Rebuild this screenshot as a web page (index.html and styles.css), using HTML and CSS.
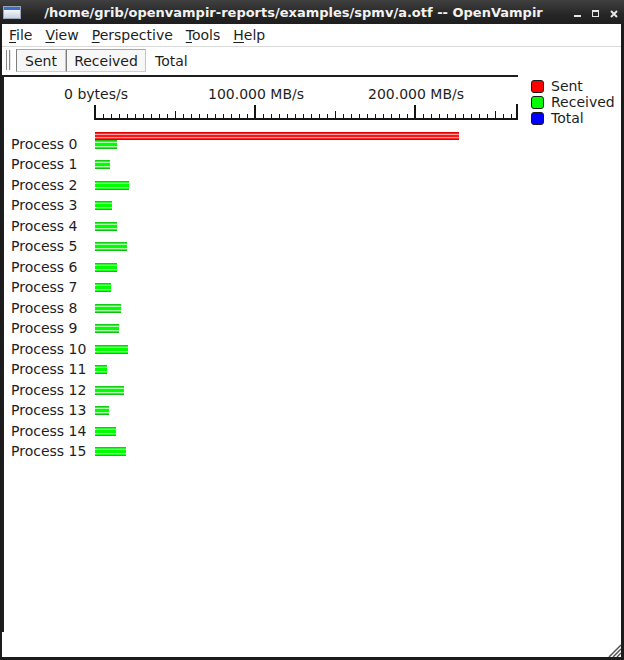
FILE: index.html
```html
<!DOCTYPE html>
<html>
<head>
<meta charset="utf-8">
<link rel="stylesheet" href="styles.css">
</head>
<body>
<div class="window">
  <div class="titlebar">
    <svg class="appicon" width="18" height="13" viewBox="0 0 18 13">
      <defs><linearGradient id="g" x1="0" y1="0" x2="0" y2="1"><stop offset="0" stop-color="#f4f6fa"/><stop offset="1" stop-color="#c9d2df"/></linearGradient></defs>
      <rect x="0.5" y="0.5" width="17" height="12" fill="#dfe5ee" stroke="#9aa6b8"/>
      <rect x="1" y="1" width="16" height="3" fill="#3b6fc9"/>
      <rect x="1" y="4" width="16" height="8" fill="url(#g)"/>
    </svg>
    <div class="title">/home/grib/openvampir-reports/examples/spmv/a.otf -- OpenVampir</div>
    <div class="wbtns">
      <svg width="8" height="8" viewBox="0 0 8 8"><rect x="0" y="5" width="7" height="2" fill="#e6e6e6"/></svg>
      <svg width="8" height="8" viewBox="0 0 8 8"><rect x="0.5" y="0.5" width="6" height="6" fill="none" stroke="#e6e6e6"/><rect x="0" y="0" width="7" height="2" fill="#e6e6e6"/></svg>
      <svg width="8" height="8" viewBox="0 0 8 8"><path d="M1 1L7 7M7 1L1 7" stroke="#e6e6e6" stroke-width="2"/></svg>
    </div>
  </div>
  <div class="client">
    <div class="menubar">
      <span class="menu"><u>F</u>ile</span>
      <span class="menu"><u>V</u>iew</span>
      <span class="menu"><u>P</u>erspective</span>
      <span class="menu"><u>T</u>ools</span>
      <span class="menu"><u>H</u>elp</span>
    </div>
    <div class="toolbar">
      <div class="handle"></div>
      <div class="tb checked sent">Sent</div>
      <div class="tb checked recv">Received</div>
      <div class="tb flat">Total</div>
    </div>
    <div class="content">
      <div class="chart">
        <svg class="axis" width="514" height="53" viewBox="0 0 514 53">
          <g class="axislabels" text-anchor="middle">
            <text x="92" y="22">0 bytes/s</text>
            <text x="252" y="22">100.000 MB/s</text>
            <text x="412" y="22">200.000 MB/s</text>
          </g>
          <g fill="#141414" shape-rendering="crispEdges">
            <rect x="90" y="41" width="424" height="2"/>
            <rect x="90" y="28" width="2" height="15"/>
            <rect x="250" y="28" width="2" height="15"/>
            <rect x="410" y="28" width="2" height="15"/>
            <rect x="512" y="27" width="2" height="16"/>
          </g>
          <path stroke="#141414" stroke-width="1" shape-rendering="crispEdges" d="M171.5 34V43M331.5 34V43M491.5 34V43M99.5 37V43M107.5 37V43M115.5 37V43M123.5 37V43M131.5 37V43M139.5 37V43M147.5 37V43M155.5 37V43M163.5 37V43M179.5 37V43M187.5 37V43M195.5 37V43M203.5 37V43M211.5 37V43M219.5 37V43M227.5 37V43M235.5 37V43M243.5 37V43M259.5 37V43M267.5 37V43M275.5 37V43M283.5 37V43M291.5 37V43M299.5 37V43M307.5 37V43M315.5 37V43M323.5 37V43M339.5 37V43M347.5 37V43M355.5 37V43M363.5 37V43M371.5 37V43M379.5 37V43M387.5 37V43M395.5 37V43M403.5 37V43M419.5 37V43M427.5 37V43M435.5 37V43M443.5 37V43M451.5 37V43M459.5 37V43M467.5 37V43M475.5 37V43M483.5 37V43M499.5 37V43M507.5 37V43"/>
        </svg>
        <div class="rows">
          <div class="row"><span class="label">Process 0</span><div class="bars"><div class="bar sentbar" style="width:364px"></div><div class="bar recvbar" style="width:22px"></div></div></div>
          <div class="row"><span class="label">Process 1</span><div class="bars"><div class="bar recvbar" style="width:15px"></div></div></div>
          <div class="row"><span class="label">Process 2</span><div class="bars"><div class="bar recvbar" style="width:34px"></div></div></div>
          <div class="row"><span class="label">Process 3</span><div class="bars"><div class="bar recvbar" style="width:17px"></div></div></div>
          <div class="row"><span class="label">Process 4</span><div class="bars"><div class="bar recvbar" style="width:22px"></div></div></div>
          <div class="row"><span class="label">Process 5</span><div class="bars"><div class="bar recvbar" style="width:32px"></div></div></div>
          <div class="row"><span class="label">Process 6</span><div class="bars"><div class="bar recvbar" style="width:22px"></div></div></div>
          <div class="row"><span class="label">Process 7</span><div class="bars"><div class="bar recvbar" style="width:16px"></div></div></div>
          <div class="row"><span class="label">Process 8</span><div class="bars"><div class="bar recvbar" style="width:26px"></div></div></div>
          <div class="row"><span class="label">Process 9</span><div class="bars"><div class="bar recvbar" style="width:24px"></div></div></div>
          <div class="row"><span class="label">Process 10</span><div class="bars"><div class="bar recvbar" style="width:33px"></div></div></div>
          <div class="row"><span class="label">Process 11</span><div class="bars"><div class="bar recvbar" style="width:12px"></div></div></div>
          <div class="row"><span class="label">Process 12</span><div class="bars"><div class="bar recvbar" style="width:29px"></div></div></div>
          <div class="row"><span class="label">Process 13</span><div class="bars"><div class="bar recvbar" style="width:14px"></div></div></div>
          <div class="row"><span class="label">Process 14</span><div class="bars"><div class="bar recvbar" style="width:21px"></div></div></div>
          <div class="row"><span class="label">Process 15</span><div class="bars"><div class="bar recvbar" style="width:31px"></div></div></div>
        </div>
      </div>
      <div class="legend">
        <div class="litem"><span class="swatch red"></span>Sent</div>
        <div class="litem"><span class="swatch green"></span>Received</div>
        <div class="litem"><span class="swatch blue"></span>Total</div>
      </div>
    </div>
    <div class="statusbar">
      <svg class="grip" width="14" height="14" viewBox="0 0 14 14">
        <path d="M14 2L2 14M14 6L6 14M14 10L10 14" stroke="#555" stroke-width="1.5"/>
      </svg>
    </div>
  </div>
</div>
</body>
</html>
```

FILE: styles.css
```css
html, body {
  margin: 0;
  padding: 0;
}
body {
  width: 624px;
  height: 660px;
  overflow: hidden;
  background: #1b1b1b;
  font-family: "DejaVu Sans", sans-serif;
  font-size: 14px;
  color: #1e1e1e;
}
.window {
  display: flex;
  flex-direction: column;
  height: 660px;
}
.titlebar {
  height: 24px;
  flex: none;
  display: flex;
  align-items: center;
  background: linear-gradient(#404040, #262626 60%, #1e1e1e);
  padding: 0 6px 0 3px;
}
.appicon {
  flex: none;
  display: block;
}
.title {
  flex: 1;
  text-align: center;
  color: #f2f2f2;
  font-weight: bold;
  font-size: 13px;
  white-space: nowrap;
  padding-right: 8px;
}
.wbtns {
  display: flex;
  gap: 10px;
  align-items: center;
  padding-top: 3px;
}
.wbtns svg {
  display: block;
}
.client {
  flex: 1;
  background: #ffffff;
  margin: 0 3px 3px 2px;
  display: flex;
  flex-direction: column;
  min-height: 0;
}
.menubar {
  height: 22px;
  flex: none;
  display: flex;
  align-items: center;
  border-bottom: 1px solid #dadada;
}
.menu {
  padding: 0 6.5px;
  white-space: nowrap;
}
.menu:first-child {
  padding-left: 7px;
}
.menu u {
  text-decoration: underline;
  text-underline-offset: 2px;
}
.toolbar {
  height: 23px;
  padding: 2px 0 1px 0;
  flex: none;
  display: flex;
  align-items: stretch;
}
.handle {
  box-sizing: content-box;
  width: 2px;
  height: 20px;
  margin: 1px 0 0 4px;
  border-left: 1px solid #8c8c8c;
  border-right: 1px solid #8c8c8c;
  box-shadow: 1px 0 0 #e4e4e4;
}
.tb {
  box-sizing: border-box;
  line-height: 21px;
  padding-top: 1px;
  border: 1px solid transparent;
  text-align: center;
  white-space: nowrap;
}
.checked {
  background: #f7f7f7;
  border-color: #a6a6a6 #c4c4c4 #cfcfcf #7e7e7e;
}
.sent {
  width: 50px;
  margin-left: 6px;
}
.recv {
  width: 80px;
}
.flat {
  padding: 1px 8px 0 8px;
  text-align: left;
}
.content {
  flex: 1;
  display: flex;
  margin-top: 2px;
  min-height: 0;
}
.chart {
  width: 514px;
  border-top: 2px solid #1e1e1e;
  border-left: 2px solid #1e1e1e;
  flex: none;
  display: flex;
  flex-direction: column;
}
.axis {
  display: block;
  flex: none;
}
.axislabels {
  font-family: "DejaVu Sans", sans-serif;
  font-size: 14px;
  fill: #1e1e1e;
}
.rows {
  display: flex;
  flex-direction: column;
}
.row {
  height: 20.5px;
  display: flex;
  align-items: flex-end;
}
.label {
  width: 84px;
  padding-left: 7px;
  line-height: 14px;
  white-space: nowrap;
  flex: none;
}
.bars {
  display: flex;
  flex-direction: column;
  align-items: flex-start;
  margin-bottom: 1.6px;
}
.bar {
  flex: none;
}
.sentbar {
  height: 8px;
  background: linear-gradient(#e00000 0 1px, #ff2a2a 1px 2px, #ffa0a0 2px 3px, #ff1414 3px 5px, #ffa0a0 5px 6px, #ff2a2a 6px 7px, #d80000 7px 8px);
}
.recvbar {
  height: 9px;
  background: linear-gradient(#12cc12 0 1px, #22ff22 1px 2px, #a8ffa8 2px 3px, #00ff00 3px 6px, #a8ffa8 6px 7px, #22ff22 7px 8px, #10c010 8px 9px);
}
.legend {
  flex: 1;
  padding: 3px 0 0 13px;
}
.litem {
  display: flex;
  align-items: center;
  height: 16px;
  line-height: 16px;
  gap: 7px;
  white-space: nowrap;
}
.swatch {
  width: 11px;
  height: 11px;
  border: 1px solid #1a1a1a;
  border-radius: 3px;
  flex: none;
}
.red { background: #ff0000; }
.green { background: #00ff00; }
.blue { background: #0000ff; }
.statusbar {
  height: 25px;
  flex: none;
  display: flex;
  justify-content: flex-end;
  align-items: flex-end;
}
.grip {
  display: block;
}
```
